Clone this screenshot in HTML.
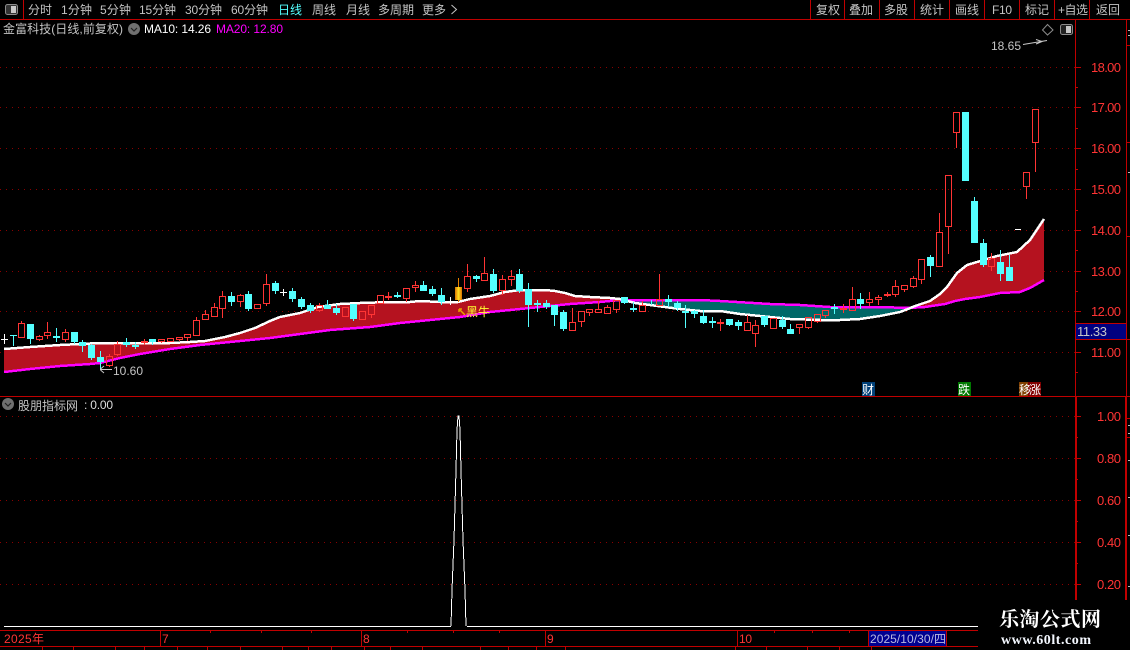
<!DOCTYPE html>
<html lang="zh">
<head>
<meta charset="utf-8">
<title>金富科技</title>
<style>
html,body{margin:0;padding:0;background:#000;}
body{width:1130px;height:650px;overflow:hidden;}
svg{display:block;}
text{font-family:"Liberation Sans","WenQuanYi Zen Hei","Noto Sans CJK SC",sans-serif;font-size:12px;fill:#c4c4c4;}
.r{fill:#ff3434;font-size:13px;}
.t{font-size:12px;fill:#c4c4c4;}
</style>
</head>
<body>
<svg width="1130" height="650" viewBox="0 0 1130 650" xmlns="http://www.w3.org/2000/svg">
<defs>
<linearGradient id="g" x1="0" x2="1" y1="0" y2="0"><stop offset="0" stop-color="#d87000"/><stop offset=".5" stop-color="#ffe020"/><stop offset="1" stop-color="#d87000"/></linearGradient>
</defs>
<rect width="1130" height="650" fill="#000"/>

<!-- grid -->
<g stroke="#8a0000" stroke-width="1" stroke-dasharray="1 5" shape-rendering="crispEdges" fill="none">
<path d="M0 67.5H1075M0 107.5H1075M0 148.5H1075M0 189.5H1075M0 230.5H1075M0 271.5H1075M0 311.5H1075M0 352.5H1075M0 416.5H1075M0 458.5H1075M0 500.5H1075M0 542.5H1075M0 584.5H1075"/>
</g>

<!-- MA fill -->
<polygon fill="#b5121f" points="4,349 30,347 60,345 100,343 140,343 170,343 190,342 205,341 225,337 240,333 255,328 270,321 280,317 300,313 318,307 340,304 360,303 390,302 410,302 420,301 440,302 458,302 470,299 490,296 505,292 520,290 545,290 555,291 565,293 575,296 590,297 610,298 620,299 620,300 600,302 570,304 540,307 520,309 490,312 460,317 430,320 400,323 370,327 330,330 300,334 270,338 250,340 230,342 200,345 170,349 140,354 120,358 100,363 90,364 60,366 30,369 4,372"/>
<polygon fill="#006868" points="620,299 635,303 650,305 665,307 680,309 700,311 720,311 740,314 760,316 780,318 790,319 820,320 840,320 860,319 880,316 900,312 908,309 908,308 880,307 850,307 830,307 800,305 770,304 720,301 700,300 660,300 620,300"/>
<polygon fill="#b5121f" points="908,309 915,306 930,301 940,294 947,287 957,273 967,265 977,262 997,256 1017,252 1030,240 1044,219 1044,280 1030,288 1020,292 1000,293 980,297 965,299 955,301 945,304 925,307 908,308"/>
<!-- MA lines -->
<polyline fill="none" stroke="#ff00ff" stroke-width="2.5" shape-rendering="crispEdges" points="4,372 30,369 60,366 90,364 100,363 120,358 140,354 170,349 200,345 230,342 250,340 270,338 300,334 330,330 370,327 400,323 430,320 460,317 490,312 520,309 540,307 570,304 600,302 620,300 660,300 700,300 720,301 770,304 800,305 830,307 850,307 880,307 908,308 925,307 945,304 955,301 965,299 980,297 1000,293 1020,292 1030,288 1044,280"/>
<polyline fill="none" stroke="#ffffff" stroke-width="2.5" shape-rendering="crispEdges" points="4,349 30,347 60,345 100,343 140,343 170,343 190,342 205,341 225,337 240,333 255,328 270,321 280,317 300,313 318,307 340,304 360,303 390,302 410,302 420,301 440,302 458,302 470,299 490,296 505,292 520,290 545,290 555,291 565,293 575,296 590,297 610,298 620,299 635,303 650,305 665,307 680,309 700,311 720,311 740,314 760,316 780,318 790,319 820,320 840,320 860,319 880,316 900,312 908,309 915,306 930,301 940,294 947,287 957,273 967,265 977,262 997,256 1017,252 1030,240 1044,219"/>

<!-- cyan candles -->
<path shape-rendering="crispEdges" fill="none" stroke="#54ffff" stroke-width="1" d="M13.5 335V346M30.5 324V344M56.5 328V342M74.5 332V344M82.5 340V352M91.5 344V360M100.5 351V370M126.5 338V347M135.5 342V349M152.5 339V345M231.5 292V306M248.5 291V311M275.5 281V294M292.5 288V302M301.5 297V309M310.5 303V313M327.5 300V309M336.5 304V315M353.5 304V321M397.5 292V298M423.5 281V291M432.5 286V296M441.5 288V305M476.5 275V282M493.5 269V293M519.5 269V293M528.5 283V327M537.5 300V312M546.5 300V309M554.5 305V326M563.5 310V331M624.5 297V304M633.5 302V312M651.5 300V305M668.5 295V307M677.5 301V311M685.5 305V328M694.5 310V318M703.5 310V324M712.5 317V328M729.5 319V326M738.5 320V330M764.5 316V327M782.5 316V329M790.5 324V334M834.5 304V314M860.5 293V309M930.5 255V277M965.5 112V181M974.5 197V243M983.5 239V267M1000.5 250V281M1009.5 255V281"/>
<path shape-rendering="crispEdges" fill="none" stroke="#54ffff" stroke-width="7" d="M13.5 335V336M30.5 324V339M56.5 336V338M74.5 332V342M82.5 342V346M91.5 345V358M100.5 357V362M126.5 342V345M135.5 345V347M152.5 339V342M231.5 296V302M248.5 294V309M275.5 283V291M292.5 291V299M301.5 299V307M310.5 305V311M327.5 305V309M336.5 308V313M353.5 304V319M397.5 295V297M423.5 285V291M432.5 289V294M441.5 295V302M476.5 276V279M493.5 274V291M519.5 274V291M528.5 289V305M537.5 303V305M546.5 303V307M554.5 305V315M563.5 312V329M624.5 297V303M633.5 308V310M668.5 299V302M677.5 303V308M685.5 311V313M694.5 311V314M703.5 316V323M712.5 321V323M729.5 319V325M738.5 322V326M764.5 316V325M782.5 320V327M790.5 329V334M834.5 307V309M860.5 299V304M930.5 257V266M965.5 112V181M974.5 201V243M983.5 243V265M1000.5 262V274M1009.5 267V281"/>

<!-- red candles -->
<path shape-rendering="crispEdges" fill="none" stroke="#ff3434" stroke-width="1" d="M18.5 323.5h6V337.5h-6zM21.5 321V323M36.5 336.5h6V339.5h-6zM39.5 335V336M39.5 340V341M44.5 332.5h6V335.5h-6zM47.5 322V332M47.5 336V339M62.5 332.5h6V339.5h-6zM65.5 329V332M65.5 340V342M106.5 356.5h6V365.5h-6zM109.5 354V356M109.5 366V367M114.5 344.5h6V354.5h-6zM117.5 341V344M117.5 355V356M141.5 341.5h6V342.5h-6zM144.5 339V345M158.5 339.5h6V341.5h-6zM161.5 342V343M167.5 338.5h6V341.5h-6zM176.5 337.5h6V339.5h-6zM179.5 340V341M184.5 334.5h6V337.5h-6zM187.5 338V341M193.5 320.5h6V335.5h-6zM196.5 317V320M202.5 314.5h6V319.5h-6zM205.5 310V314M211.5 307.5h6V316.5h-6zM214.5 303V307M219.5 296.5h6V308.5h-6zM222.5 291V296M222.5 309V318M237.5 295.5h6V301.5h-6zM240.5 294V295M240.5 302V307M254.5 304.5h6V308.5h-6zM263.5 284.5h6V303.5h-6zM266.5 274V284M266.5 304V306M316.5 305.5h6V310.5h-6zM319.5 303V305M319.5 311V312M342.5 307.5h6V316.5h-6zM359.5 311.5h6V319.5h-6zM368.5 305.5h6V314.5h-6zM371.5 315V318M377.5 295.5h6V303.5h-6zM385.5 296.5h6V297.5h-6zM388.5 292V300M403.5 288.5h6V298.5h-6zM406.5 299V302M412.5 285.5h6V287.5h-6zM415.5 281V285M415.5 288V292M464.5 276.5h6V288.5h-6zM467.5 264V276M467.5 289V292M481.5 273.5h6V280.5h-6zM484.5 257V273M499.5 279.5h6V290.5h-6zM502.5 275V279M502.5 291V295M508.5 276.5h6V279.5h-6zM511.5 270V276M511.5 280V286M569.5 322.5h6V330.5h-6zM572.5 308V322M578.5 311.5h6V321.5h-6zM581.5 322V327M586.5 309.5h6V312.5h-6zM589.5 313V316M595.5 309.5h6V312.5h-6zM598.5 301V309M604.5 307.5h6V313.5h-6zM607.5 305V307M613.5 300.5h6V309.5h-6zM616.5 310V313M639.5 305.5h6V311.5h-6zM642.5 301V305M656.5 299.5h6V305.5h-6zM659.5 274V299M717.5 322.5h6V323.5h-6zM720.5 319V331M744.5 322.5h6V330.5h-6zM747.5 315V322M752.5 325.5h6V333.5h-6zM755.5 320V325M755.5 334V347M770.5 318.5h6V328.5h-6zM796.5 324.5h6V327.5h-6zM799.5 328V334M805.5 317.5h6V327.5h-6zM808.5 328V329M814.5 314.5h6V321.5h-6zM817.5 322V323M822.5 310.5h6V315.5h-6zM825.5 316V318M840.5 308.5h6V309.5h-6zM843.5 304V313M849.5 299.5h6V310.5h-6zM852.5 287V299M866.5 299.5h6V302.5h-6zM869.5 292V299M869.5 303V306M875.5 297.5h6V299.5h-6zM878.5 295V297M878.5 300V305M884.5 294.5h6V295.5h-6zM887.5 292V297M892.5 286.5h6V294.5h-6zM895.5 280V286M895.5 295V297M901.5 285.5h6V289.5h-6zM904.5 290V292M910.5 278.5h6V286.5h-6zM913.5 276V278M913.5 287V288M918.5 259.5h6V279.5h-6zM921.5 280V284M936.5 232.5h6V266.5h-6zM939.5 213V232M945.5 175.5h6V226.5h-6zM948.5 227V254M953.5 112.5h6V132.5h-6zM956.5 133V148M988.5 258.5h6V266.5h-6zM991.5 253V258M991.5 267V271M1023.5 172.5h6V186.5h-6zM1026.5 187V199M1032.5 109.5h6V142.5h-6zM1035.5 143V172"/>

<!-- white dojis, gold candle -->
<path shape-rendering="crispEdges" fill="none" stroke="#fff" stroke-width="1" d="M4.5 334V344M1 339.5H8M283.5 289V296M280 292.5H287M450.5 297V305M447 301.5H454M1015 229.5H1021"/>
<path shape-rendering="crispEdges" stroke="#e88000" d="M458.5 278V302"/>
<rect x="455" y="287" width="7" height="13" fill="url(#g)"/>

<!-- annotations -->
<path fill="none" stroke="#c8c8c8" stroke-width="1" d="M1023 44.5L1047 40.5M1036 39.5L1042 41.5L1036 44M100 369.5H112M100.5 369L104 366M100.5 370L104 373"/>
<text x="991" y="50" textLength="30" lengthAdjust="spacing" font-size="12">18.65</text>
<text x="113" y="375" textLength="30" lengthAdjust="spacing">10.60</text>
<path fill="none" stroke="#e8a000" stroke-width="1.5" d="M459 309L465 315M459 309V312M459 309H462"/>
<text x="466" y="316" textLength="24" lengthAdjust="spacing" style="fill:#ffff30;font-size:12px">黑牛</text>

<!-- signals -->
<rect x="862" y="382" width="13" height="14" fill="#004078"/>
<text x="862" y="394" style="fill:#fff;font-size:12px">财</text>
<rect x="958" y="382" width="13" height="14" fill="#007800"/>
<text x="958" y="394" style="fill:#fff;font-size:12px">跌</text>
<rect x="1019" y="382" width="11" height="14" fill="#804000"/>
<rect x="1028" y="382" width="13" height="14" fill="#800000"/>
<text x="1019" y="394" style="fill:#fff;font-size:12px">移</text>
<text x="1029" y="394" style="fill:#fff;font-size:12px">涨</text>

<!-- lower panel -->
<path shape-rendering="crispEdges" fill="none" stroke="#fff" d="M4 626.5H451M467 626.5H978"/>
<polyline fill="none" stroke="#fff" stroke-width="1" shape-rendering="crispEdges" points="451,626 452,590 454,540 456,470 457,430 458,416 459,416 460,430 461,470 463,540 465,590 466,626"/>

<!-- frame lines -->
<g fill="none" stroke="#c00000" stroke-width="1" shape-rendering="crispEdges">
<path d="M0 19.5H1130M0 396.5H1130M0 630.5H978M0 646.5H978"/>
<path d="M23.5 0V19M810.5 0V19M844.5 0V19M879.5 0V19M914.5 0V19M949.5 0V19M984.5 0V19M1019.5 0V19M1054.5 0V19M1089.5 0V19"/>
<path d="M1075.5 19V396M1126.5 19V396"/>
<path d="M1075 67.5H1081M1075 107.5H1081M1075 148.5H1081M1075 189.5H1081M1075 230.5H1081M1075 271.5H1081M1075 311.5H1081M1075 352.5H1081M1075 87.5H1078M1075 128.5H1078M1075 169.5H1078M1075 210.5H1078M1075 250.5H1078M1075 291.5H1078M1075 332.5H1078M1075 372.5H1078"/>
<path d="M1075 416.5H1081M1075 458.5H1081M1075 500.5H1081M1075 542.5H1081M1075 584.5H1081M1075 437.5H1078M1075 479.5H1078M1075 521.5H1078M1075 563.5H1078"/>
<path d="M1126 45.5H1130M1126 142.5H1130M1126 236.5H1130M1126 339.5H1130M1126 418.5H1130M1126 437.5H1130"/>
<path d="M160.5 630V646M361.5 630V646M545.5 630V646M737.5 630V646"/>
<path d="M210.5 630V633M261.5 630V633M311.5 630V633M407.5 630V633M453.5 630V633M499.5 630V633M774.5 630V633M812.5 630V633M849.5 630V633"/>
<path d="M42.5 646V650M73.5 646V650M115.5 646V650M144.5 646V650M177.5 646V650M207.5 646V650M240.5 646V650M282.5 646V650M308.5 646V650M331.5 646V650M364.5 646V650M390.5 646V650M422.5 646V650M480.5 646V650M508.5 646V650M536.5 646V650M565.5 646V650M735.5 646V650M766.5 646V650M807.5 646V650M839.5 646V650M871.5 646V650"/>
</g>
<rect x="1075" y="396" width="2" height="204" fill="#c00000"/>
<rect x="1125" y="396" width="2" height="204" fill="#c00000"/>
<path shape-rendering="crispEdges" stroke="#bbb" d="M1128 30.5H1130M1128 35.5H1130M1128 172.5H1130M1128 425.5H1130M1128 433.5H1130M1128 460.5H1130M1128 497.5H1130M1128 535.5H1130M1128 586.5H1130"/>

<!-- top bar icons -->
<rect x="5.5" y="4.5" width="12" height="10" rx="2" fill="#333" stroke="#8c8c8c"/>
<rect x="11" y="6" width="5" height="7" fill="#c8c8c8"/>
<rect x="1060.5" y="24.5" width="12" height="10" rx="2" fill="#222" stroke="#8c8c8c"/>
<rect x="1066" y="26" width="5" height="7" fill="#c8c8c8"/>
<path d="M1047.5 24.5L1053 30L1047.5 35L1042.5 30Z" fill="none" stroke="#8c8c8c"/>

<!-- top bar text -->
<text class="t" x="28" y="14" textLength="24">分时</text>
<text class="t" x="61" y="14" textLength="31">1分钟</text>
<text class="t" x="100" y="14" textLength="31">5分钟</text>
<text class="t" x="139" y="14" textLength="37">15分钟</text>
<text class="t" x="185" y="14" textLength="37">30分钟</text>
<text class="t" x="231" y="14" textLength="37">60分钟</text>
<text x="278" y="14" textLength="24" style="fill:#54ffff">日线</text>
<text class="t" x="312" y="14" textLength="24">周线</text>
<text class="t" x="346" y="14" textLength="24">月线</text>
<text class="t" x="378" y="14" textLength="36">多周期</text>
<text class="t" x="422" y="14" textLength="24">更多</text>
<path d="M451.5 5L456.5 9.5L451.5 14" fill="none" stroke="#c4c4c4"/>
<text class="t" x="816" y="14" textLength="24">复权</text>
<text class="t" x="849" y="14" textLength="24">叠加</text>
<text class="t" x="884" y="14" textLength="24">多股</text>
<text class="t" x="920" y="14" textLength="24">统计</text>
<text class="t" x="955" y="14" textLength="24">画线</text>
<text class="t" x="992" y="14" textLength="20">F10</text>
<text class="t" x="1025" y="14" textLength="24">标记</text>
<text class="t" x="1058" y="14" textLength="30">+自选</text>
<text class="t" x="1096" y="14" textLength="24">返回</text>

<!-- header row -->
<text class="t" x="3" y="33" textLength="120" lengthAdjust="spacing">金富科技(日线,前复权)</text>
<circle cx="134" cy="29" r="6" fill="#707070"/>
<path d="M131 28L134 31L137 28" fill="none" stroke="#222" stroke-width="1.2"/>
<text x="144" y="33" textLength="67" lengthAdjust="spacing" style="fill:#fff">MA10: 14.26</text>
<text x="216" y="33" textLength="67" lengthAdjust="spacing" style="fill:#ff00ff">MA20: 12.80</text>

<!-- lower header -->
<circle cx="8" cy="404" r="6" fill="#707070"/>
<path d="M5 403L8 406L11 403" fill="none" stroke="#222" stroke-width="1.2"/>
<text class="t" x="18" y="410" textLength="60" lengthAdjust="spacing">股朋指标网</text>
<text x="84" y="409" textLength="29" lengthAdjust="spacing" style="fill:#ddd">: 0.00</text>

<!-- axis labels -->
<text class="r" x="1091" y="72" textLength="30">18.00</text>
<text class="r" x="1091" y="112" textLength="30">17.00</text>
<text class="r" x="1091" y="153" textLength="30">16.00</text>
<text class="r" x="1091" y="194" textLength="30">15.00</text>
<text class="r" x="1091" y="235" textLength="30">14.00</text>
<text class="r" x="1091" y="276" textLength="30">13.00</text>
<text class="r" x="1091" y="316" textLength="30">12.00</text>
<text class="r" x="1091" y="357" textLength="30">11.00</text>
<rect x="1076" y="323" width="50" height="16" fill="#000080"/>
<path d="M1076 323.5H1126M1076 339.5H1126" stroke="#c00000" shape-rendering="crispEdges"/>
<text x="1077" y="336" textLength="30" lengthAdjust="spacing" style="fill:#c8c8c8;font-size:13px">11.33</text>
<text class="r" x="1097" y="421" textLength="24">1.00</text>
<text class="r" x="1097" y="463" textLength="24">0.80</text>
<text class="r" x="1097" y="505" textLength="24">0.60</text>
<text class="r" x="1097" y="547" textLength="24">0.40</text>
<text class="r" x="1097" y="589" textLength="24">0.20</text>

<!-- date axis -->
<text class="r" x="4" y="643" textLength="40" lengthAdjust="spacing" style="font-size:12px">2025年</text>
<text class="r" x="162" y="643" style="font-size:12px">7</text>
<text class="r" x="363" y="643" style="font-size:12px">8</text>
<text class="r" x="547" y="643" style="font-size:12px">9</text>
<text class="r" x="739" y="643" textLength="13" style="font-size:12px">10</text>
<rect x="869" y="631" width="78" height="15" fill="#000090"/>
<path d="M868.5 631V646M946.5 631V646" stroke="#c00000" shape-rendering="crispEdges"/>
<text x="870" y="643" textLength="76" lengthAdjust="spacing" style="fill:#b8b8e0;font-size:12px">2025/10/30/四</text>

<!-- watermark -->
<rect x="978" y="600" width="152" height="50" fill="#000"/>
<text x="999" y="626" textLength="102" lengthAdjust="spacing" style="font-family:'Noto Serif CJK SC','Liberation Serif',serif;font-size:20px;font-weight:700;fill:#fff">乐淘公式网</text>
<text x="1001" y="644" textLength="90" lengthAdjust="spacing" style="font-family:'Liberation Serif',serif;font-size:14px;font-weight:700;fill:#f4f8ff">www.60lt.com</text>
</svg>
</body>
</html>
